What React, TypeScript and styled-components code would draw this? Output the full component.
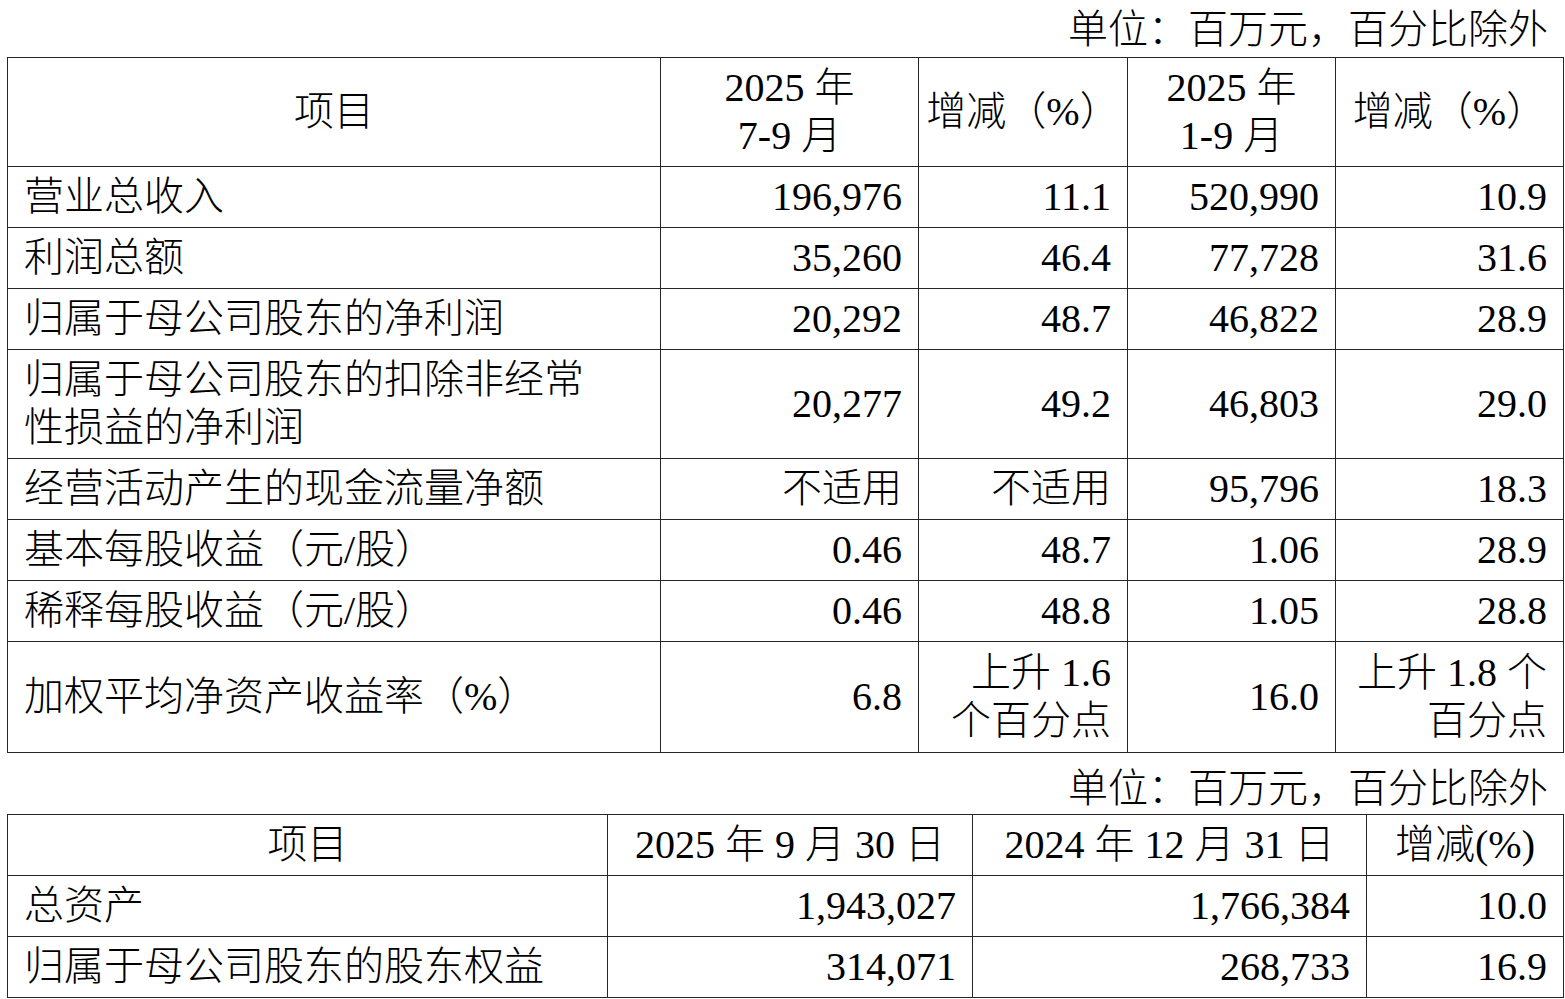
import React from 'react'
import styled, { createGlobalStyle } from 'styled-components'

const FONT = `"Liberation Serif", "Times New Roman", "Noto Sans CJK SC", serif`

const GlobalStyle = createGlobalStyle`
  html, body {
    margin: 0;
    padding: 0;
    background: #ffffff;
  }
  body {
    font-family: ${FONT};
    color: #000000;
  }
`

const Page = styled.div`
  width: 1556px;
  margin-left: 7px;
  display: flex;
  flex-direction: column;
  font-family: ${FONT};
  font-weight: 300;
`

const Unit = styled.div<{ top: number; bottom: number }>`
  font-size: 40px;
  line-height: 48px;
  text-align: right;
  padding-top: ${(p) => p.top}px;
  padding-bottom: ${(p) => p.bottom}px;
  padding-right: 15px;
  white-space: nowrap;
`

const Table = styled.table`
  width: 100%;
  border-collapse: collapse;
  table-layout: fixed;
  font-family: ${FONT};
  font-weight: 300;
  font-size: 40px;
  line-height: 48px;
`

const Cell = styled.td<{ align?: 'left' | 'right' | 'center' }>`
  border: 1.5px solid #262626;
  padding: 6px 16px 6px 16px;
  text-align: ${(p) => p.align || 'right'};
  vertical-align: middle;
  white-space: nowrap;
`

const Label = styled(Cell)`
  padding-left: 16px;
`

const Head = styled(Cell)`
  padding-left: 6px;
  padding-right: 6px;
`

const Tall = styled(Label)`
  height: 98px;
`

type Row = { label: React.ReactNode; values: React.ReactNode[]; tall?: boolean }

const quarterRows: Row[] = [
  { label: '营业总收入', values: ['196,976', '11.1', '520,990', '10.9'] },
  { label: '利润总额', values: ['35,260', '46.4', '77,728', '31.6'] },
  { label: '归属于母公司股东的净利润', values: ['20,292', '48.7', '46,822', '28.9'] },
  {
    label: (
      <>
        归属于母公司股东的扣除非经常
        <br />
        性损益的净利润
      </>
    ),
    values: ['20,277', '49.2', '46,803', '29.0'],
  },
  { label: '经营活动产生的现金流量净额', values: ['不适用', '不适用', '95,796', '18.3'] },
  { label: '基本每股收益（元/股）', values: ['0.46', '48.7', '1.06', '28.9'] },
  { label: '稀释每股收益（元/股）', values: ['0.46', '48.8', '1.05', '28.8'] },
  {
    label: '加权平均净资产收益率（%）',
    tall: true,
    values: [
      '6.8',
      <>
        上升 1.6
        <br />
        个百分点
      </>,
      '16.0',
      <>
        上升 1.8 个
        <br />
        百分点
      </>,
    ],
  },
]

const balanceRows: Row[] = [
  { label: '总资产', values: ['1,943,027', '1,766,384', '10.0'] },
  { label: '归属于母公司股东的股东权益', values: ['314,071', '268,733', '16.9'] },
]

export default function App() {
  return (
    <Page>
      <GlobalStyle />
      <Unit top={6} bottom={3}>
        单位：百万元，百分比除外
      </Unit>
      <Table>
        <colgroup>
          <col style={{ width: 653 }} />
          <col style={{ width: 258 }} />
          <col style={{ width: 209 }} />
          <col style={{ width: 208 }} />
          <col style={{ width: 228 }} />
        </colgroup>
        <tbody>
          <tr>
            <Head align="center">项目</Head>
            <Head align="center">
              2025 年
              <br />
              7-9 月
            </Head>
            <Head align="center">增减（%）</Head>
            <Head align="center">
              2025 年
              <br />
              1-9 月
            </Head>
            <Head align="center">增减（%）</Head>
          </tr>
          {quarterRows.map((r, i) => (
            <tr key={i}>
              {r.tall ? <Tall align="left">{r.label}</Tall> : <Label align="left">{r.label}</Label>}
              {r.values.map((v, j) => (
                <Cell key={j}>{v}</Cell>
              ))}
            </tr>
          ))}
        </tbody>
      </Table>
      <Unit top={12} bottom={1}>
        单位：百万元，百分比除外
      </Unit>
      <Table>
        <colgroup>
          <col style={{ width: 600 }} />
          <col style={{ width: 365 }} />
          <col style={{ width: 394 }} />
          <col style={{ width: 197 }} />
        </colgroup>
        <tbody>
          <tr>
            <Head align="center">项目</Head>
            <Head align="center">2025 年 9 月 30 日</Head>
            <Head align="center">2024 年 12 月 31 日</Head>
            <Head align="center">增减(%)</Head>
          </tr>
          {balanceRows.map((r, i) => (
            <tr key={i}>
              <Label align="left">{r.label}</Label>
              {r.values.map((v, j) => (
                <Cell key={j}>{v}</Cell>
              ))}
            </tr>
          ))}
        </tbody>
      </Table>
    </Page>
  )
}
